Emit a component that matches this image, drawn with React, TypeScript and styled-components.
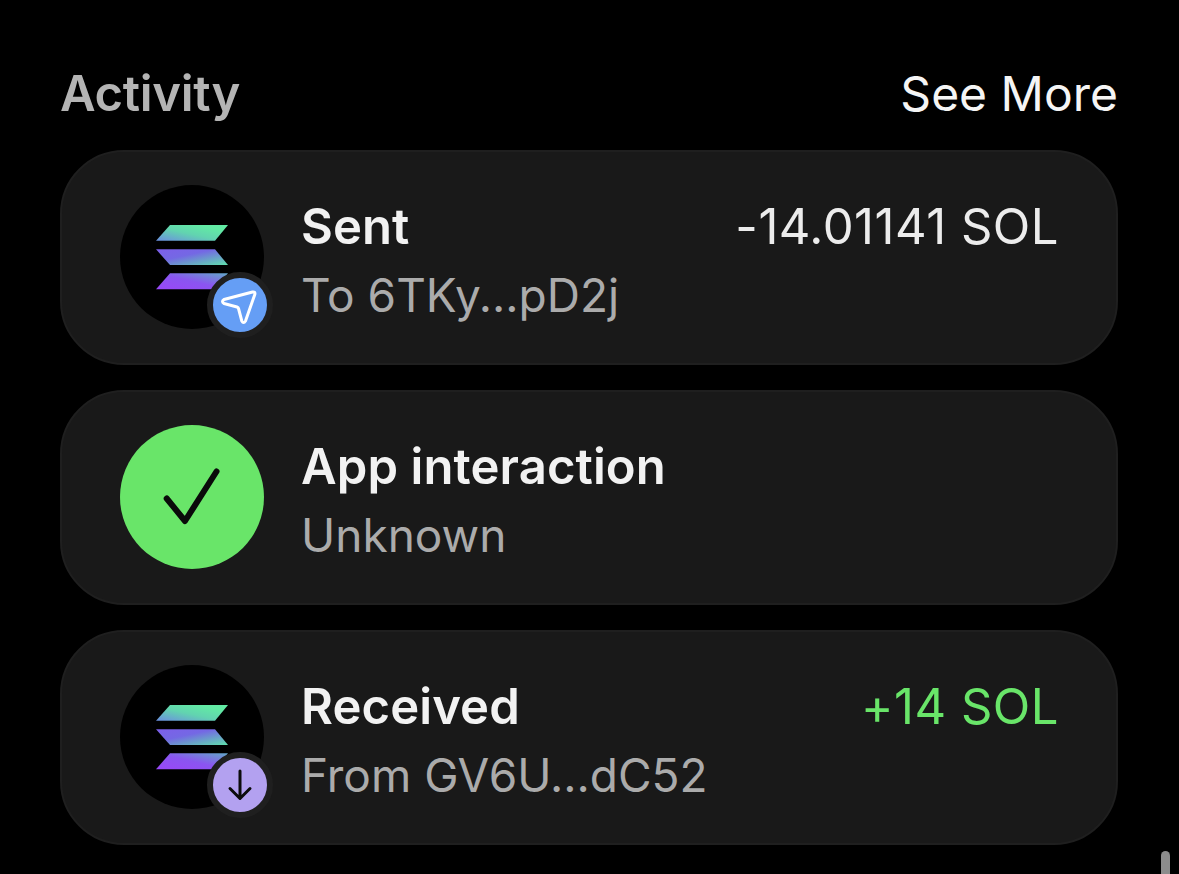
import React from 'react';
import styled, { createGlobalStyle } from 'styled-components';

const GlobalStyle = createGlobalStyle`
  html, body {
    margin: 0;
    padding: 0;
    background: #000;
    height: 100%;
    overflow: hidden;
  }
  body {
    font-family: Inter, "Liberation Sans", sans-serif;
  }
`;

const Page = styled.div`
  position: relative;
  width: 1179px;
  height: 874px;
  overflow: hidden;
  box-sizing: border-box;
  padding: 61px 61px 0 60px;
  background: #000;
`;

const Header = styled.div`
  display: flex;
  justify-content: space-between;
  align-items: center;
  height: 64px;
  margin-bottom: 25px;
`;

const Heading = styled.h2`
  margin: 0;
  font-size: 49px;
  font-weight: 600;
  letter-spacing: -0.3px;
  color: #b4b4b4;
`;

const SeeMore = styled.a`
  font-size: 48px;
  font-weight: 400;
  letter-spacing: 0;
  color: #f5f5f5;
`;

const List = styled.div`
  display: flex;
  flex-direction: column;
  gap: 25px;
`;

const Card = styled.div`
  display: flex;
  align-items: center;
  box-sizing: border-box;
  height: 215px;
  padding: 0 57px 0 58px;
  gap: 37px;
  background: #191919;
  border: 2px solid #1f1f1f;
  border-radius: 64px;
`;

const Avatar = styled.div<{ $bg: string }>`
  position: relative;
  flex: none;
  width: 144px;
  height: 144px;
  margin-top: -1px;
  border-radius: 50%;
  background: ${({ $bg }) => $bg};

  & > svg {
    display: block;
  }
`;

const Badge = styled.div<{ $bg: string }>`
  position: absolute;
  left: 87px;
  top: 87px;
  width: 54px;
  height: 54px;
  border: 6px solid #1f1f1f;
  border-radius: 50%;
  background: ${({ $bg }) => $bg};

  & > svg {
    display: block;
  }
`;

const Body = styled.div`
  flex: 1;
  display: flex;
  flex-direction: column;
  gap: 11px;
  padding-top: 6px;
  min-width: 0;
`;

const Row = styled.div`
  display: flex;
  justify-content: space-between;
  align-items: center;
  height: 56px;
`;

const Title = styled.span`
  font-size: 49px;
  font-weight: 600;
  letter-spacing: 0.1px;
  color: #f2f2f2;
`;

const Amount = styled.span<{ $positive?: boolean }>`
  font-size: 49px;
  font-weight: 400;
  letter-spacing: 0.5px;
  color: ${({ $positive }) => ($positive ? '#69e569' : '#ececec')};
`;

const Subtitle = styled.div`
  height: 56px;
  line-height: 56px;
  margin-top: 2px;
  font-size: 46px;
  font-weight: 400;
  letter-spacing: 0;
  color: #ababab;
`;

const Scrollbar = styled.div`
  position: absolute;
  left: 1161px;
  top: 851px;
  width: 9px;
  height: 40px;
  border-radius: 5px;
  background: #8c8c8c;
`;

function SolanaLogo({ id }: { id: string }) {
  return (
    <svg width="144" height="144" viewBox="0 0 144 144">
      <defs>
        <linearGradient id={`${id}-top`} x1="0" y1="1" x2="1" y2="0">
          <stop offset="0" stopColor="#6b8ee0" />
          <stop offset="0.45" stopColor="#62d3b0" />
          <stop offset="0.8" stopColor="#62eaa4" />
        </linearGradient>
        <linearGradient id={`${id}-mid`} x1="0" y1="0" x2="1" y2="1">
          <stop offset="0" stopColor="#7d5fea" />
          <stop offset="0.4" stopColor="#7468e4" />
          <stop offset="1" stopColor="#5fe0ac" />
        </linearGradient>
        <linearGradient id={`${id}-bot`} x1="0" y1="1" x2="1" y2="0">
          <stop offset="0" stopColor="#9a47f8" />
          <stop offset="0.5" stopColor="#8a55f0" />
          <stop offset="1" stopColor="#62a8c8" />
        </linearGradient>
      </defs>
      <polygon points="50,40 108,40 95,55.7 36,55.7" fill={`url(#${id}-top)`} />
      <polygon points="36,64.3 95,64.3 108,80 50,80" fill={`url(#${id}-mid)`} />
      <polygon points="50,88.3 108,88.3 95,104.3 36,104.3" fill={`url(#${id}-bot)`} />
    </svg>
  );
}

function SendIcon() {
  return (
    <svg width="54" height="54" viewBox="0 0 54 54" fill="none">
      <path
        d="M11 21.5 L39.5 14 Q42.5 13.5 41.8 16.5 L32.5 43 Q30.5 46 28.8 43 L25.5 30.5 Q25.2 29.4 24 29 L11 25.5 Q8 23.5 11 21.5 Z"
        stroke="#fff"
        strokeWidth="3"
        strokeLinejoin="round"
      />
    </svg>
  );
}

function DownIcon() {
  return (
    <svg width="54" height="54" viewBox="0 0 54 54" fill="none">
      <path
        d="M27 13 V40 M17 30.5 L27 40.5 L37 30.5"
        stroke="#0c0c0c"
        strokeWidth="3"
        strokeLinecap="round"
        strokeLinejoin="round"
      />
    </svg>
  );
}

function CheckIcon() {
  return (
    <svg width="144" height="144" viewBox="0 0 144 144" fill="none">
      <path
        d="M46.7 73.5 L65 96 L96.5 46.5"
        stroke="#0a0a0a"
        strokeWidth="6"
        strokeLinecap="round"
        strokeLinejoin="round"
      />
    </svg>
  );
}

export default function App() {
  return (
    <Page>
      <GlobalStyle />
      <Header>
        <Heading>Activity</Heading>
        <SeeMore>See More</SeeMore>
      </Header>
      <List>
        <Card>
          <Avatar $bg="#000">
            <SolanaLogo id="sent" />
            <Badge $bg="#659ef5">
              <SendIcon />
            </Badge>
          </Avatar>
          <Body>
            <Row>
              <Title>Sent</Title>
              <Amount>-14.01141 SOL</Amount>
            </Row>
            <Subtitle>To 6TKy...pD2j</Subtitle>
          </Body>
        </Card>
        <Card>
          <Avatar $bg="#69e569">
            <CheckIcon />
          </Avatar>
          <Body>
            <Row>
              <Title>App interaction</Title>
            </Row>
            <Subtitle>Unknown</Subtitle>
          </Body>
        </Card>
        <Card>
          <Avatar $bg="#000">
            <SolanaLogo id="received" />
            <Badge $bg="#b3a1f0">
              <DownIcon />
            </Badge>
          </Avatar>
          <Body>
            <Row>
              <Title>Received</Title>
              <Amount $positive>+14 SOL</Amount>
            </Row>
            <Subtitle>From GV6U...dC52</Subtitle>
          </Body>
        </Card>
      </List>
      <Scrollbar />
    </Page>
  );
}
